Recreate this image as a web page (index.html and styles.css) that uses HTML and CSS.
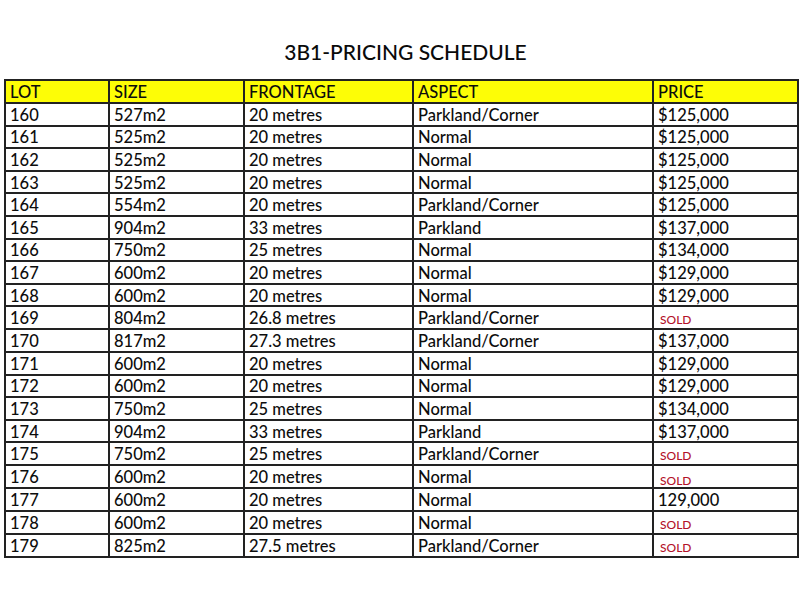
FILE: index.html
```html
<!DOCTYPE html>
<html>
<head>
<meta charset="utf-8">
<link rel="stylesheet" href="styles.css">
</head>
<body>
<div class="page">
  <h1 class="title">3B1-PRICING SCHEDULE</h1>
  <table class="schedule">
    <colgroup>
      <col class="c-lot"><col class="c-size"><col class="c-front"><col class="c-aspect"><col class="c-price">
    </colgroup>
    <thead>
      <tr><th>LOT</th><th>SIZE</th><th>FRONTAGE</th><th>ASPECT</th><th>PRICE</th></tr>
    </thead>
    <tbody>
      <tr><td>160</td><td>527m2</td><td>20 metres</td><td>Parkland/Corner</td><td>$125,000</td></tr>
      <tr><td>161</td><td>525m2</td><td>20 metres</td><td>Normal</td><td>$125,000</td></tr>
      <tr><td>162</td><td>525m2</td><td>20 metres</td><td>Normal</td><td>$125,000</td></tr>
      <tr><td>163</td><td>525m2</td><td>20 metres</td><td>Normal</td><td>$125,000</td></tr>
      <tr><td>164</td><td>554m2</td><td>20 metres</td><td>Parkland/Corner</td><td>$125,000</td></tr>
      <tr><td>165</td><td>904m2</td><td>33 metres</td><td>Parkland</td><td>$137,000</td></tr>
      <tr><td>166</td><td>750m2</td><td>25 metres</td><td>Normal</td><td>$134,000</td></tr>
      <tr><td>167</td><td>600m2</td><td>20 metres</td><td>Normal</td><td>$129,000</td></tr>
      <tr><td>168</td><td>600m2</td><td>20 metres</td><td>Normal</td><td>$129,000</td></tr>
      <tr><td>169</td><td>804m2</td><td>26.8 metres</td><td>Parkland/Corner</td><td><span class="sold">SOLD</span></td></tr>
      <tr><td>170</td><td>817m2</td><td>27.3 metres</td><td>Parkland/Corner</td><td>$137,000</td></tr>
      <tr><td>171</td><td>600m2</td><td>20 metres</td><td>Normal</td><td>$129,000</td></tr>
      <tr><td>172</td><td>600m2</td><td>20 metres</td><td>Normal</td><td>$129,000</td></tr>
      <tr><td>173</td><td>750m2</td><td>25 metres</td><td>Normal</td><td>$134,000</td></tr>
      <tr><td>174</td><td>904m2</td><td>33 metres</td><td>Parkland</td><td>$137,000</td></tr>
      <tr><td>175</td><td>750m2</td><td>25 metres</td><td>Parkland/Corner</td><td><span class="sold">SOLD</span></td></tr>
      <tr><td>176</td><td>600m2</td><td>20 metres</td><td>Normal</td><td><span class="sold low">SOLD</span></td></tr>
      <tr><td>177</td><td>600m2</td><td>20 metres</td><td>Normal</td><td>129,000</td></tr>
      <tr><td>178</td><td>600m2</td><td>20 metres</td><td>Normal</td><td><span class="sold">SOLD</span></td></tr>
      <tr><td>179</td><td>825m2</td><td>27.5 metres</td><td>Parkland/Corner</td><td><span class="sold">SOLD</span></td></tr>
    </tbody>
  </table>
</div>
</body>
</html>
```

FILE: styles.css
```css
html, body {
  margin: 0;
  padding: 0;
  background: #ffffff;
}

.page {
  padding: 39px 3px 0 4px;
  font-family: Lato, "Open Sans", sans-serif;
  color: #0d0d0d;
}

.title {
  margin: 0 0 14px 0;
  padding-left: 10px;
  text-align: center;
  font-size: 21px;
  line-height: 26px;
  font-weight: 500;
  color: #0a0a0a;
}

.schedule {
  border-collapse: collapse;
  table-layout: fixed;
  width: 793px;
  font-size: 16.5px;
  font-weight: 500;
}

.c-lot { width: 104px; }
.c-size { width: 135px; }
.c-front { width: 169px; }
.c-aspect { width: 240px; }
.c-price { width: 145px; }

.schedule th,
.schedule td {
  border: 2px solid #222222;
  padding: 1px 0 0 4px;
  text-align: left;
  vertical-align: middle;
  white-space: nowrap;
  line-height: 18px;
}

.schedule th {
  background: #fdfd06;
  font-weight: 500;
}

.schedule thead tr {
  height: 23px;
}

.schedule tbody tr {
  height: 22.6px;
}

.sold {
  color: #b3122a;
  font-size: 12px;
  position: relative;
  top: 1px;
  padding-left: 2px;
}

.sold.low {
  top: 3px;
}
```
